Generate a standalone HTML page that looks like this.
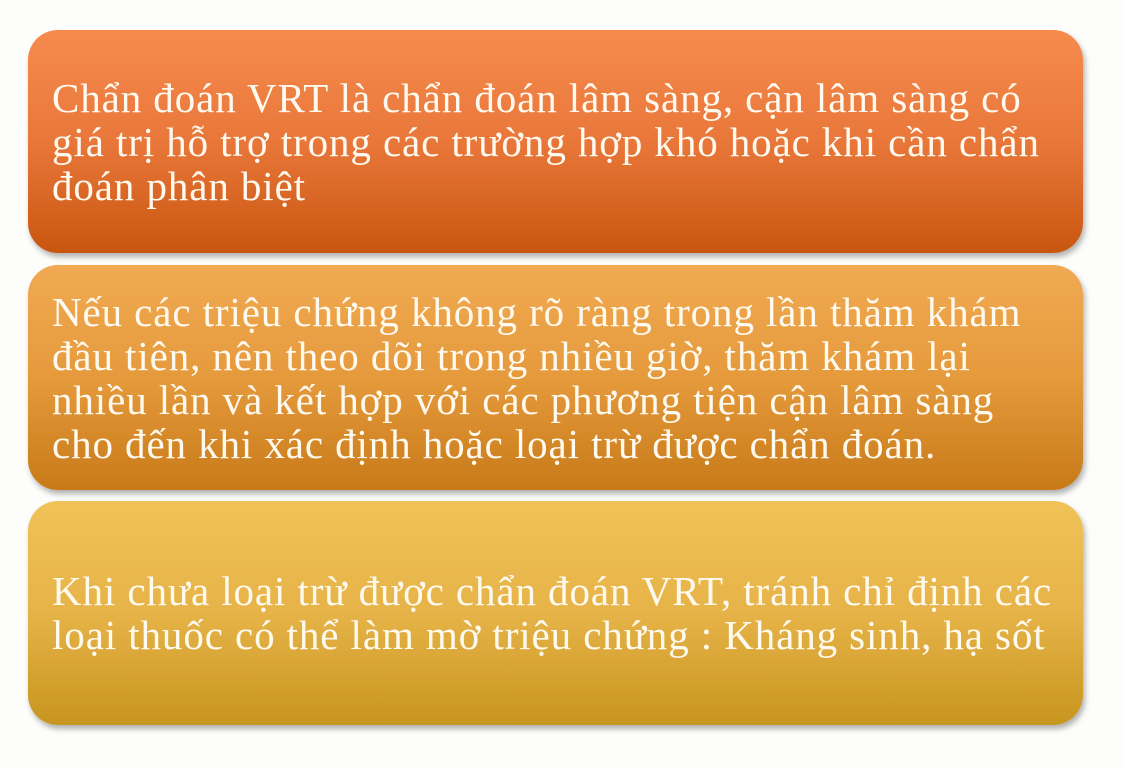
<!DOCTYPE html>
<html><head><meta charset="utf-8"><style>
html,body{margin:0;padding:0;background:#fdfdfc;width:1126px;height:768px;overflow:hidden}
.b{position:absolute;left:28px;width:1055px;border-radius:30px;display:flex;align-items:center;box-sizing:border-box;padding-left:24px;
font-family:"Liberation Serif",serif;font-size:41px;letter-spacing:0.9px;line-height:44px;color:#fffaf0;white-space:nowrap;
box-shadow:2px 4px 6px rgba(0,0,0,0.3)}
.b1{top:30px;height:223px;background:linear-gradient(#f68b4e,#e9773a 50%,#c9560f)}
.b2{top:265px;height:225px;background:linear-gradient(#f1aa52,#e59a3c 50%,#c87a18)}
.b3{top:501px;height:224px;background:linear-gradient(#f0c258,#e6b348 50%,#c8951f)}
</style></head><body>
<div class="b b1"><div>Chẩn đoán VRT là chẩn đoán lâm sàng, cận lâm sàng có<br>giá trị hỗ trợ trong các trường hợp khó hoặc khi cần chẩn<br>đoán phân biệt</div></div>
<div class="b b2"><div>Nếu các triệu chứng không rõ ràng trong lần thăm khám<br>đầu tiên, nên theo dõi trong nhiều giờ, thăm khám lại<br>nhiều lần và kết hợp với các phương tiện cận lâm sàng<br>cho đến khi xác định hoặc loại trừ được chẩn đoán.</div></div>
<div class="b b3"><div>Khi chưa loại trừ được chẩn đoán VRT, tránh chỉ định các<br>loại thuốc có thể làm mờ triệu chứng : Kháng sinh, hạ sốt</div></div>
</body></html>
